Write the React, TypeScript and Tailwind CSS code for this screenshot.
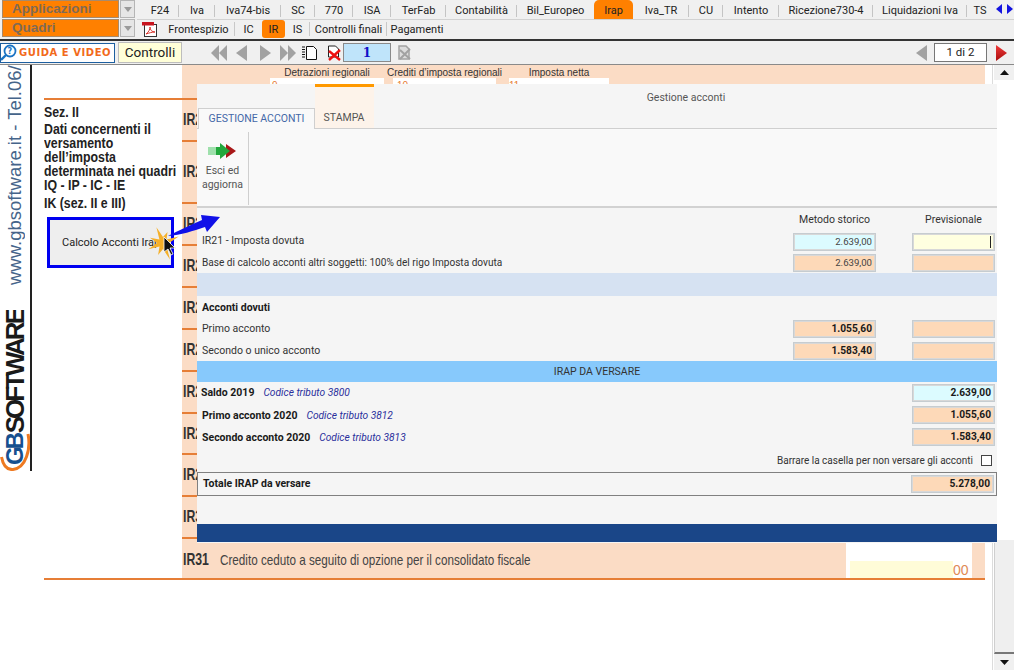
import React from "react";

const topTabs = [
  { t: "F24", w: "w-[38px]" },
  { t: "Iva", w: "w-[36px]" },
  { t: "Iva74-bis", w: "w-[66px]" },
  { t: "SC", w: "w-[34px]" },
  { t: "770", w: "w-[38px]" },
  { t: "ISA", w: "w-[38px]" },
  { t: "TerFab", w: "w-[55px]" },
  { t: "Contabilità", w: "w-[71px]" },
  { t: "Bil_Europeo", w: "w-[77px]" },
  { t: "Irap", w: "w-[39px]", on: true },
  { t: "Iva_TR", w: "w-[56px]" },
  { t: "CU", w: "w-[34px]" },
  { t: "Intento", w: "w-[56px]" },
  { t: "Ricezione730-4", w: "w-[94px]" },
  { t: "Liquidazioni Iva", w: "w-[94px]" },
  { t: "TS", w: "w-[26px]" },
];

const subTabs = [
  { t: "Frontespizio", w: "w-[73px]" },
  { t: "IC", w: "w-[27px]" },
  { t: "IR", w: "w-[23px]", on: true },
  { t: "IS", w: "w-[25px]" },
  { t: "Controlli finali", w: "w-[77px]" },
  { t: "Pagamenti", w: "w-[60px]", last: true },
];

const irRows = [
  { t: "IR2", h: "h-[42px]" },
  { t: "IR2", h: "h-[62px]" },
  { t: "IR2", h: "h-[42px]" },
  { t: "IR2", h: "h-[42px]" },
  { t: "IR2", h: "h-[42px]" },
  { t: "IR2", h: "h-[42px]" },
  { t: "IR2", h: "h-[42px]" },
  { t: "IR2", h: "h-[41px]" },
  { t: "IR2", h: "h-[42px]" },
  { t: "IR3", h: "h-[42px]" },
];

const starR = [17, 6, 14, 5, 18, 6, 13, 5, 16, 6, 14, 5, 17, 6, 12, 5];
const starPts = starR
  .map((r, i) => {
    const a = (i / starR.length) * Math.PI * 2 - 0.4;
    return `${(18 + r * Math.cos(a)).toFixed(1)},${(31 + r * Math.sin(a)).toFixed(1)}`;
  })
  .join(" ");

function Combo({ label }: { label: string }) {
  return (
    <div className="flex h-[19px] items-stretch pl-[2px]">
      <div className="w-[117px] h-[18px] bg-[#ff8000] border border-[#a98a6a] pl-[9px] text-[13.5px] leading-[15px] font-bold text-[#7f6a55] font-['Liberation_Sans',sans-serif]">
        {label}
      </div>
      <div className="ml-[1px] w-[15px] h-[18px] bg-[#e6e6e6] border border-[#b5b5b5] flex items-center justify-center">
        <svg width="8" height="5" viewBox="0 0 8 5"><path d="M0 0h8L4 5z" fill="#9a9a9a" /></svg>
      </div>
    </div>
  );
}

function Tri({ dir, color = "#a2a2a2", w = 11 }: { dir: "l" | "r"; color?: string; w?: number }) {
  return (
    <svg width={w} height="16" viewBox="0 0 11 16" preserveAspectRatio="none" className="shrink-0">
      <path d={dir === "l" ? "M11 0v16L0 8z" : "M0 0v16l11-8z"} fill={color} />
    </svg>
  );
}

function Field({ v, tone, bold, caret }: { v?: string; tone: "blue" | "peach" | "yellow"; bold?: boolean; caret?: boolean }) {
  const bg = tone === "blue" ? "bg-[#dcfbff]" : tone === "yellow" ? "bg-[#ffffe0]" : "bg-[#fdd9b8]";
  return (
    <div
      className={`${bg} ${bold ? "font-bold text-[#1a1a1a] text-[10.2px]" : "text-[#444] text-[9.6px]"} w-[83px] h-[18px] shrink-0 border border-[#c6ccd0] shadow-[inset_0_0_0_1px_#d8d8d8] flex items-center justify-end pr-[3px]`}
    >
      {v}
      {caret && <span className="w-[1px] h-[12px] bg-[#222]" />}
    </div>
  );
}

function Empty() {
  return <div className="w-[83px] shrink-0" />;
}

function Row({ h, children, right, mid, tx = "" }: { h: string; children?: React.ReactNode; right?: React.ReactNode; mid?: React.ReactNode; tx?: string }) {
  return (
    <div className={`${h} flex items-center gap-[36px] pr-[2px] pl-[5px]`}>
      <div className={`flex-1 whitespace-nowrap ${tx}`}>{children}</div>
      {mid ?? <Empty />}
      {right ?? <Empty />}
    </div>
  );
}

function Code({ children }: { children: string }) {
  return <span className="ml-[9px] italic text-[10.2px] text-[#2a2f9c] font-normal">{children}</span>;
}

export default function App() {
  return (
    <div className="relative w-[1014px] h-[670px] overflow-hidden bg-white flex flex-col font-['Roboto',sans-serif] text-[10.5px] text-[#222]">
      {/* Header */}
      <div className="h-[65px] shrink-0 bg-[#f0f0f0] border-b border-[#8a8a8a] flex flex-col">
        <div className="h-[39px] flex">
          <div className="w-[137px] shrink-0">
            <Combo label="Applicazioni" />
            <Combo label="Quadri" />
          </div>
          <div className="flex-1 flex flex-col">
            <div className="h-[20px] flex pl-[4px] border-b border-[#d2d2d2] text-[11px] text-[#222] relative">
              {topTabs.map((t) => (
                <div
                  key={t.t}
                  className={`${t.w} shrink-0 h-[19px] pt-[4px] flex items-center justify-center ${
                    t.on ? "bg-[#ff8000] rounded-t-[5px]" : "relative"
                  }`}
                >
                  {t.t}
                  {!t.on && t.t !== "Bil_Europeo" && t.t !== "TS" && (
                    <span className="absolute right-0 top-[5px] h-[12px] w-[1px] bg-[#c4c4c4]" />
                  )}
                </div>
              ))}
              <div className="flex items-start gap-[5px] pl-[3px] pt-[4px]">
                <svg width="6" height="10" viewBox="0 0 6 10"><path d="M6 0v10L0 5z" fill="#1414e0" /></svg>
                <svg width="6" height="10" viewBox="0 0 6 10"><path d="M0 0v10l6-5z" fill="#1414e0" /></svg>
              </div>
            </div>
            <div className="h-[19px] flex text-[11px]">
              <div className="w-[25px] shrink-0 pl-[4px] pt-[1px]">
                <svg width="17" height="16" viewBox="0 0 17 16">
                  <rect x="3.5" y="3.5" width="12" height="12" fill="#fff" stroke="#333" />
                  <rect x="1" y="1" width="12" height="3.5" fill="#c8141e" />
                  <path d="M5 13c3-2 4-5 4-7 0 3 2 5 5 5-3 0-6 1-9 2z" fill="none" stroke="#d8342c" strokeWidth="1" />
                </svg>
              </div>
              {subTabs.map((t) => (
                <div
                  key={t.t}
                  className={`${t.w} shrink-0 h-[18px] pt-[2px] flex items-center justify-center relative ${
                    t.on ? "bg-[#ff8000] rounded-[3px]" : ""
                  }`}
                >
                  {t.t}
                  {!t.on && !t.last && t.t !== "IC" && (
                    <span className="absolute right-0 top-[2px] h-[14px] w-[1px] bg-[#c8c8c8]" />
                  )}
                </div>
              ))}
            </div>
          </div>
        </div>
        <div className="h-[2px] bg-[#333]" />
        <div className="flex-1 flex items-center">
          <div className="w-[115px] h-[20px] bg-white border border-[#1d5fa0] flex items-center text-[10px] font-bold text-[#f26a1b] tracking-[0.55px] font-['DejaVu_Sans',sans-serif] whitespace-nowrap overflow-hidden">
            <svg width="17" height="17" viewBox="0 0 17 17" className="shrink-0 mr-[1px]">
              <circle cx="9" cy="7" r="5.5" fill="#fff" stroke="#1b74c4" strokeWidth="1.8" />
              <path d="M5 11l-5 5" stroke="#1b74c4" strokeWidth="2.4" />
              <text x="9" y="10" textAnchor="middle" fontSize="8" fontWeight="700" fill="#1b74c4">?</text>
            </svg>
            GUIDA E VIDEO
          </div>
          <div className="ml-[3px] w-[64px] h-[21px] bg-[#ffffd8] border border-[#bdbdbd] flex items-center justify-center text-[13.5px] text-[#222]">
            Controlli
          </div>
          <div className="ml-[29px] flex items-center">
            <Tri dir="l" w={8} />
            <Tri dir="l" w={8} />
          </div>
          <div className="ml-[9px]"><Tri dir="l" /></div>
          <div className="ml-[13px]"><Tri dir="r" /></div>
          <div className="ml-[9px] flex items-center">
            <Tri dir="r" w={8} />
            <Tri dir="r" w={8} />
          </div>
          <svg width="16" height="16" viewBox="0 0 16 16" className="ml-[6px]">
            <path d="M4.5 1.5h7l3 3v10h-10z" fill="#fff" stroke="#111" />
            <path d="M0 2h3M0 4.5h3M0 7h3M0 9.5h3M0 12h3" stroke="#111" />
          </svg>
          <svg width="16" height="16" viewBox="0 0 16 16" className="ml-[9px]">
            <path d="M1.5 1h7l3 3v8h-10z" fill="#fff" stroke="#222" />
            <path d="M2 6l11 9M13 5L2 15" stroke="#ee1111" strokeWidth="2.4" />
          </svg>
          <div className="w-[48px] h-[19px] bg-[#bfe4fa] border border-[#8a8a8a] flex items-center justify-center font-['DejaVu_Serif',serif] font-bold text-[12px] text-[#1010c8]">
            1
          </div>
          <svg width="15" height="15" viewBox="0 0 15 15" className="ml-[6px]">
            <path d="M2 1h7l3 3v10H2z" fill="#ddd" stroke="#a2a2a2" strokeWidth="1.5" />
            <path d="M3 5l10 9M13 4L3 14" stroke="#a2a2a2" strokeWidth="2" />
          </svg>
          <div className="ml-[504px]"><Tri dir="l" /></div>
          <div className="ml-[7px] w-[53px] h-[19px] bg-white border border-[#777] flex items-center justify-center text-[11.5px]">
            1 di 2
          </div>
          <div className="ml-[9px]">
            <svg width="11" height="16" viewBox="0 0 11 16">
              <defs>
                <linearGradient id="rd" x1="0" y1="0" x2="0" y2="1">
                  <stop offset="0" stopColor="#f03a3a" />
                  <stop offset="1" stopColor="#a80c0c" />
                </linearGradient>
              </defs>
              <path d="M0 0v16l11-8z" fill="url(#rd)" />
            </svg>
          </div>
        </div>
      </div>

      {/* Body */}
      <div className="flex-1 flex min-h-0">
        <div className="w-[30px] shrink-0 flex flex-col h-[406px]">
          <div className="h-[220px] shrink-0 overflow-hidden flex justify-center">
            <div className="[writing-mode:vertical-rl] rotate-180 whitespace-nowrap text-[18.5px] leading-[20px] text-[#45648a] font-['Liberation_Sans',sans-serif]">
              www.gbsoftware.it - Tel.06/
            </div>
          </div>
          <div className="mt-[25px] h-[125px] shrink-0 flex justify-center items-start overflow-hidden">
            <div className="[writing-mode:vertical-rl] rotate-180 whitespace-nowrap text-[26px] leading-[24px] font-bold tracking-[-3px] text-[#1a1a1a] font-['Liberation_Sans',sans-serif]">
              SOFTWARE
            </div>
          </div>
          <svg width="30" height="38" viewBox="0 0 30 38" className="shrink-0 -mt-[2px]">
            <path d="M28 1C31 16 26 35 13 36.5 7 37 3 32 1.5 24" fill="none" stroke="#ee7a22" strokeWidth="3" />
            <g transform="rotate(-90 15 19)">
              <text x="17" y="27" textAnchor="middle" fontSize="24" fontWeight="700" letterSpacing="-3" fill="#16508f" fontFamily="Liberation Sans, sans-serif">GB</text>
            </g>
          </svg>
        </div>
        <div className="w-[2px] h-[406px] shrink-0 bg-[#222]" />
        <div className="flex-1 min-w-0">
          <div className="ml-[12px] w-[941px] h-[515px] flex border-b-2 border-[#e67e36]">
            {/* Section column */}
            <div className="w-[138px] shrink-0">
              <div className="mt-[33px] border-t-2 border-[#e67e36] pt-[5px] font-['Liberation_Sans',sans-serif] font-bold text-[14.5px] leading-[14px] text-[#222]">
                <div className="origin-top-left scale-x-[0.85] w-[170px]">
                  <div className="h-[17px]">Sez. II</div>
                  <div>Dati concernenti il</div>
                  <div>versamento</div>
                  <div>dell’imposta</div>
                  <div>determinata nei quadri</div>
                  <div>IQ - IP - IC - IE</div>
                  <div className="mt-[4px]">IK (sez. II e III)</div>
                </div>
              </div>
              <div className="ml-[3px] mt-[7px] w-[127px] h-[51px] bg-[#eeeeee] border-[3px] border-[#0000f0] flex items-center pl-[12px] pt-[2px] text-[11px] whitespace-nowrap text-[#222]">
                Calcolo Acconti Irap
              </div>
            </div>
            {/* Peach form */}
            <div className="w-[803px] bg-[#fbdcc5]">
              <div className="h-[35px] border-b-2 border-[#e67e36] flex pl-[88px] font-['Liberation_Sans',sans-serif] text-[10px] text-[#333]">
                <div className="w-[114px] flex flex-col items-center">
                  <div className="h-[13px] whitespace-nowrap">Detrazioni regionali</div>
                  <div className="w-full flex-1 bg-white text-[#e67e36] pl-[2px]">9</div>
                </div>
                <div className="ml-[9px] w-[103px] flex flex-col items-center">
                  <div className="h-[13px] whitespace-nowrap">Crediti d’imposta regionali</div>
                  <div className="w-full flex-1 bg-white text-[#e67e36] pl-[4px]">10</div>
                </div>
                <div className="ml-[13px] w-[100px] flex flex-col items-center">
                  <div className="h-[13px] whitespace-nowrap">Imposta netta</div>
                  <div className="w-full flex-1 bg-white text-[#e67e36]">11</div>
                </div>
              </div>
              {irRows.map((r, i) => (
                <div key={i} className={`${r.h} border-b-2 border-[#e67e36] flex items-center pl-[1px]`}>
                  <span className="font-['Liberation_Sans',sans-serif] font-bold text-[17px] leading-[20px] text-[#333] origin-left scale-x-[0.72]">{r.t}</span>
                </div>
              ))}
              <div className="h-[39px] flex items-start">
                <span className="mt-[11px] ml-[1px] w-[37px] shrink-0 font-['Liberation_Sans',sans-serif] font-bold text-[17px] leading-[20px] text-[#333] origin-left scale-x-[0.72]">IR31</span>
                <span className="mt-[11px] w-[311px] whitespace-nowrap font-['Liberation_Sans',sans-serif] text-[14.5px] leading-[20px] text-[#444] origin-left scale-x-[0.806]">
                  Credito ceduto a seguito di opzione per il consolidato fiscale
                </span>
                <div className="ml-auto mr-[13px] w-[126px] h-full bg-white flex items-end pl-[4px]">
                  <div className="w-[103px] h-[17px] bg-[#fffcd8]" />
                  <span className="font-['Liberation_Sans',sans-serif] text-[14px] leading-[16px] text-[#e08a55]">00</span>
                </div>
              </div>
            </div>
          </div>
        </div>
        {/* Scrollbar */}
        <div className="w-[22px] shrink-0 border-l border-[#dcdcdc] pl-[1px] flex flex-col">
          <div className="h-[15px] bg-[#f0f0f0] flex items-center justify-center">
            <svg width="9" height="5" viewBox="0 0 9 5"><path d="M0 5h9L4.5 0z" fill="#111" /></svg>
          </div>
          <div className="h-[460px] bg-white" />
          <div className="flex-1 bg-[#efefef] border-l border-[#cfcfcf] border-b-2 border-b-[#777]" />
          <div className="h-[16px] bg-[#f0f0f0] flex items-center justify-center">
            <svg width="9" height="5" viewBox="0 0 9 5"><path d="M0 0h9L4.5 5z" fill="#111" /></svg>
          </div>
        </div>
      </div>

      {/* Modal */}
      <div className="absolute left-[197px] top-[84px] w-[800px] h-[459px] bg-[#f5f5f5] flex flex-col text-[#333]">
        <div className="absolute left-[118px] top-0 w-[59px] h-[44px] bg-[#fdf3ea] border-t-[3px] border-[#ff9900]" />
        <div className="relative h-[24px] flex items-center justify-center pt-[3px] pl-[178px] text-[#555]">Gestione acconti</div>
        <div className="relative h-[21px] flex border-b border-[#cfcfcf]">
          <div className="ml-[1px] w-[117px] h-[21px] bg-[#f9f9f9] border border-b-0 border-[#cfcfcf] flex items-center justify-center text-[#4468a8]">
            GESTIONE ACCONTI
          </div>
          <div className="w-[58px] flex items-center justify-center text-[#555]">STAMPA</div>
        </div>
        <div className="h-[79px] bg-[#f9f9f9] border-b-2 border-[#d2d2d2] flex pt-[3px]">
          <div className="w-[52px] h-[73px] border-r border-[#cfcfcf] flex flex-col items-center pt-[11px] text-[#555] leading-[14px] text-center">
            <svg width="29" height="16" viewBox="0 0 29 16" className="mb-[5px]">
              <path d="M18 1l10 7-10 7v-4h-2V5h2z" fill="#a81818" />
              <path d="M0 4h12V0l10 8-10 8v-4H0z" fill="#22a83c" />
              <path d="M0 4h8v8H0z" fill="#9fe0ac" />
            </svg>
            <span>Esci ed</span>
            <span>aggiorna</span>
          </div>
        </div>
        <div className="h-[23px] flex items-center gap-[36px] pr-[2px]">
          <div className="flex-1" />
          <div className="w-[83px] text-center whitespace-nowrap">Metodo storico</div>
          <div className="w-[83px] text-center whitespace-nowrap">Previsionale</div>
        </div>
        <Row h="h-[22px]" tx="mb-[2px]" mid={<Field v="2.639,00" tone="blue" />} right={<Field tone="yellow" caret />}>IR21 - Imposta dovuta</Row>
        <Row h="h-[20px]" tx="text-[10.1px]" mid={<Field v="2.639,00" tone="peach" />} right={<Field tone="peach" />}>
          Base di calcolo acconti altri soggetti: 100% del rigo Imposta dovuta
        </Row>
        <div className="h-[23px] bg-[#d6e2f2]" />
        <Row h="h-[22px]" tx="mt-[1px]"><span className="font-bold text-[#1a1a1a]">Acconti dovuti</span></Row>
        <Row h="h-[22px]" mid={<Field v="1.055,60" tone="peach" bold />} right={<Field tone="peach" />}>Primo acconto</Row>
        <Row h="h-[21px]" mid={<Field v="1.583,40" tone="peach" bold />} right={<Field tone="peach" />}>Secondo o unico acconto</Row>
        <div className="h-[21px] pt-[1px] bg-[#87c9fc] flex items-center justify-center text-[#333]">IRAP DA VERSARE</div>
        <Row h="h-[22px]" right={<Field v="2.639,00" tone="blue" bold />}>
          <span className="font-bold text-[#1a1a1a] -ml-[1px]">Saldo 2019</span>
          <Code>Codice tributo 3800</Code>
        </Row>
        <Row h="h-[22px]" tx="mt-[1px]" right={<Field v="1.055,60" tone="peach" bold />}>
          <span className="font-bold text-[#1a1a1a]">Primo acconto 2020</span>
          <Code>Codice tributo 3812</Code>
        </Row>
        <Row h="h-[22px]" tx="mt-[1px]" right={<Field v="1.583,40" tone="peach" bold />}>
          <span className="font-bold text-[#1a1a1a]">Secondo acconto 2020</span>
          <Code>Codice tributo 3813</Code>
        </Row>
        <div className="h-[24px] flex items-center justify-end pr-[5px] text-[10px]">
          <span>Barrare la casella per non versare gli acconti</span>
          <span className="ml-[8px] w-[11px] h-[11px] bg-white border border-[#444]" />
        </div>
        <div className="h-[24px] border border-[#808080] flex items-center justify-between pl-[5px] pr-[2px]">
          <span className="font-bold text-[#1a1a1a]">Totale IRAP da versare</span>
          <Field v="5.278,00" tone="peach" bold />
        </div>
        <div className="h-[28px]" />
        <div className="h-[18px] bg-[#1a4688]" />
      </div>

      {/* Callout star, arrow and cursor */}
      <svg width="80" height="52" viewBox="0 0 80 52" className="absolute left-[145px] top-[212px] pointer-events-none">
        <path d="M23 24C34 18 46 13 57 8L56 3 75 5 62 20 60 15C48 19 36 23 23 24z" fill="#1010e8" />
        <polygon points={starPts} fill="#f5b02a" />
        <path d="M19 25v15l4-3 3 6 2-1-3-6h5z" fill="#111" stroke="#fff" strokeWidth="0.8" />
      </svg>
    </div>
  );
}
